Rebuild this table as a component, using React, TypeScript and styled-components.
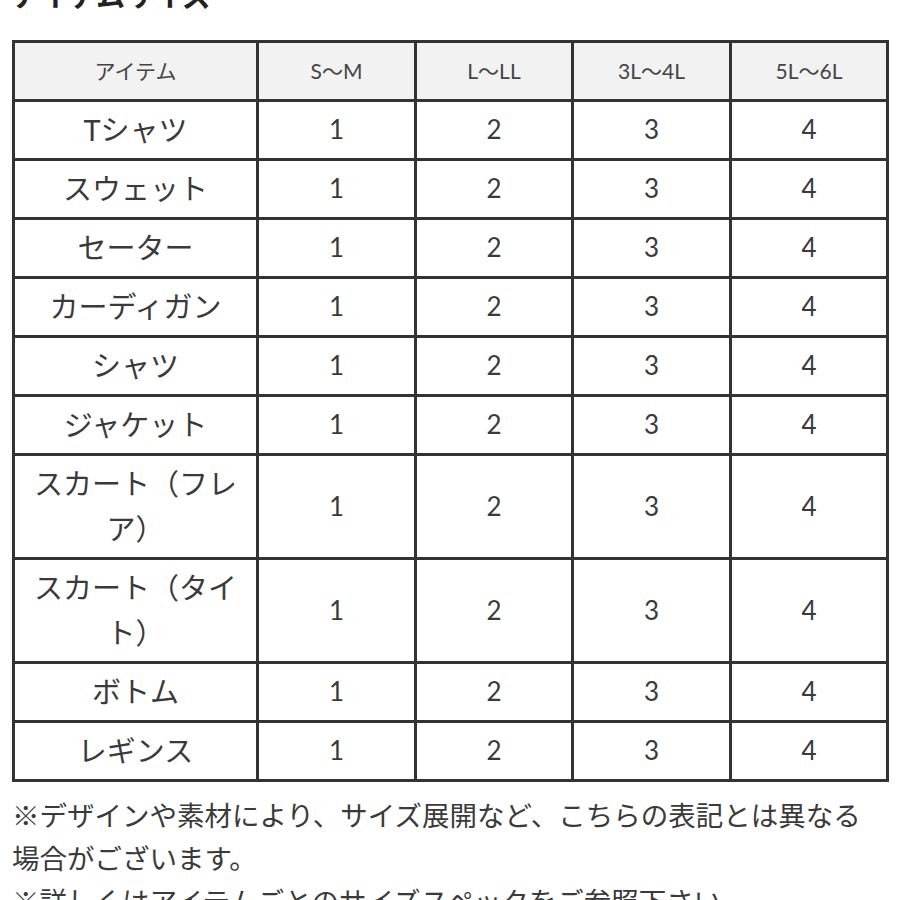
import styled, { createGlobalStyle } from "styled-components";

const GlobalStyle = createGlobalStyle`
  body {
    margin: 0;
    background: #fff;
    font-family: "Lato", "Noto Sans CJK JP", sans-serif;
    color: #333;
  }
`;

const Page = styled.div`
  padding: 0 13px 0 12px;
`;

const Title = styled.h2`
  margin: -25px 0 23px;
  font-size: 29px;
  line-height: 42px;
  font-weight: 700;
  color: #222;
`;

const Table = styled.table`
  width: 874px;
  border-collapse: collapse;
  table-layout: fixed;
  border: 3px solid #333;
`;

const Col = styled.col<{ $w: number }>`
  width: ${({ $w }) => $w}px;
`;

const HeadCell = styled.th`
  background: #f2f2f2;
  border: 3px solid #333;
  font-size: 21px;
  font-weight: 400;
  line-height: 45px;
  padding: 5px 8px 6px;
  color: #444;
  text-align: center;
`;

const Cell = styled.td<{ $item?: boolean }>`
  border: 3px solid #333;
  font-size: ${({ $item }) => ($item ? "29px" : "26px")};
  line-height: 45px;
  padding: 5px 6px 6px;
  text-align: center;
  color: #3a3a3a;
`;

const Note = styled.p`
  margin: 12px 0 0;
  font-size: 27.5px;
  line-height: 43px;
  color: #3a3a3a;
`;

const sizes = ["S〜M", "L〜LL", "3L〜4L", "5L〜6L"];
const widths = [244, 158, 157, 158, 157];
const items = [
  "Tシャツ",
  "スウェット",
  "セーター",
  "カーディガン",
  "シャツ",
  "ジャケット",
  "スカート（フレア）",
  "スカート（タイト）",
  "ボトム",
  "レギンス",
];

function App() {
  return (
    <Page>
      <GlobalStyle />
      <Title>アイテムサイズ</Title>
      <Table>
        <colgroup>
          {widths.map((w, i) => (
            <Col key={i} $w={w} />
          ))}
        </colgroup>
        <thead>
          <tr>
            <HeadCell>アイテム</HeadCell>
            {sizes.map((s) => (
              <HeadCell key={s}>{s}</HeadCell>
            ))}
          </tr>
        </thead>
        <tbody>
          {items.map((item) => (
            <tr key={item}>
              <Cell $item>{item}</Cell>
              {[1, 2, 3, 4].map((n) => (
                <Cell key={n}>{n}</Cell>
              ))}
            </tr>
          ))}
        </tbody>
      </Table>
      <Note>
        ※デザインや素材により、サイズ展開など、こちらの表記とは異なる場合がございます。
        <br />
        ※詳しくはアイテムごとのサイズスペックをご参照下さい。
      </Note>
    </Page>
  );
}

export default App;
